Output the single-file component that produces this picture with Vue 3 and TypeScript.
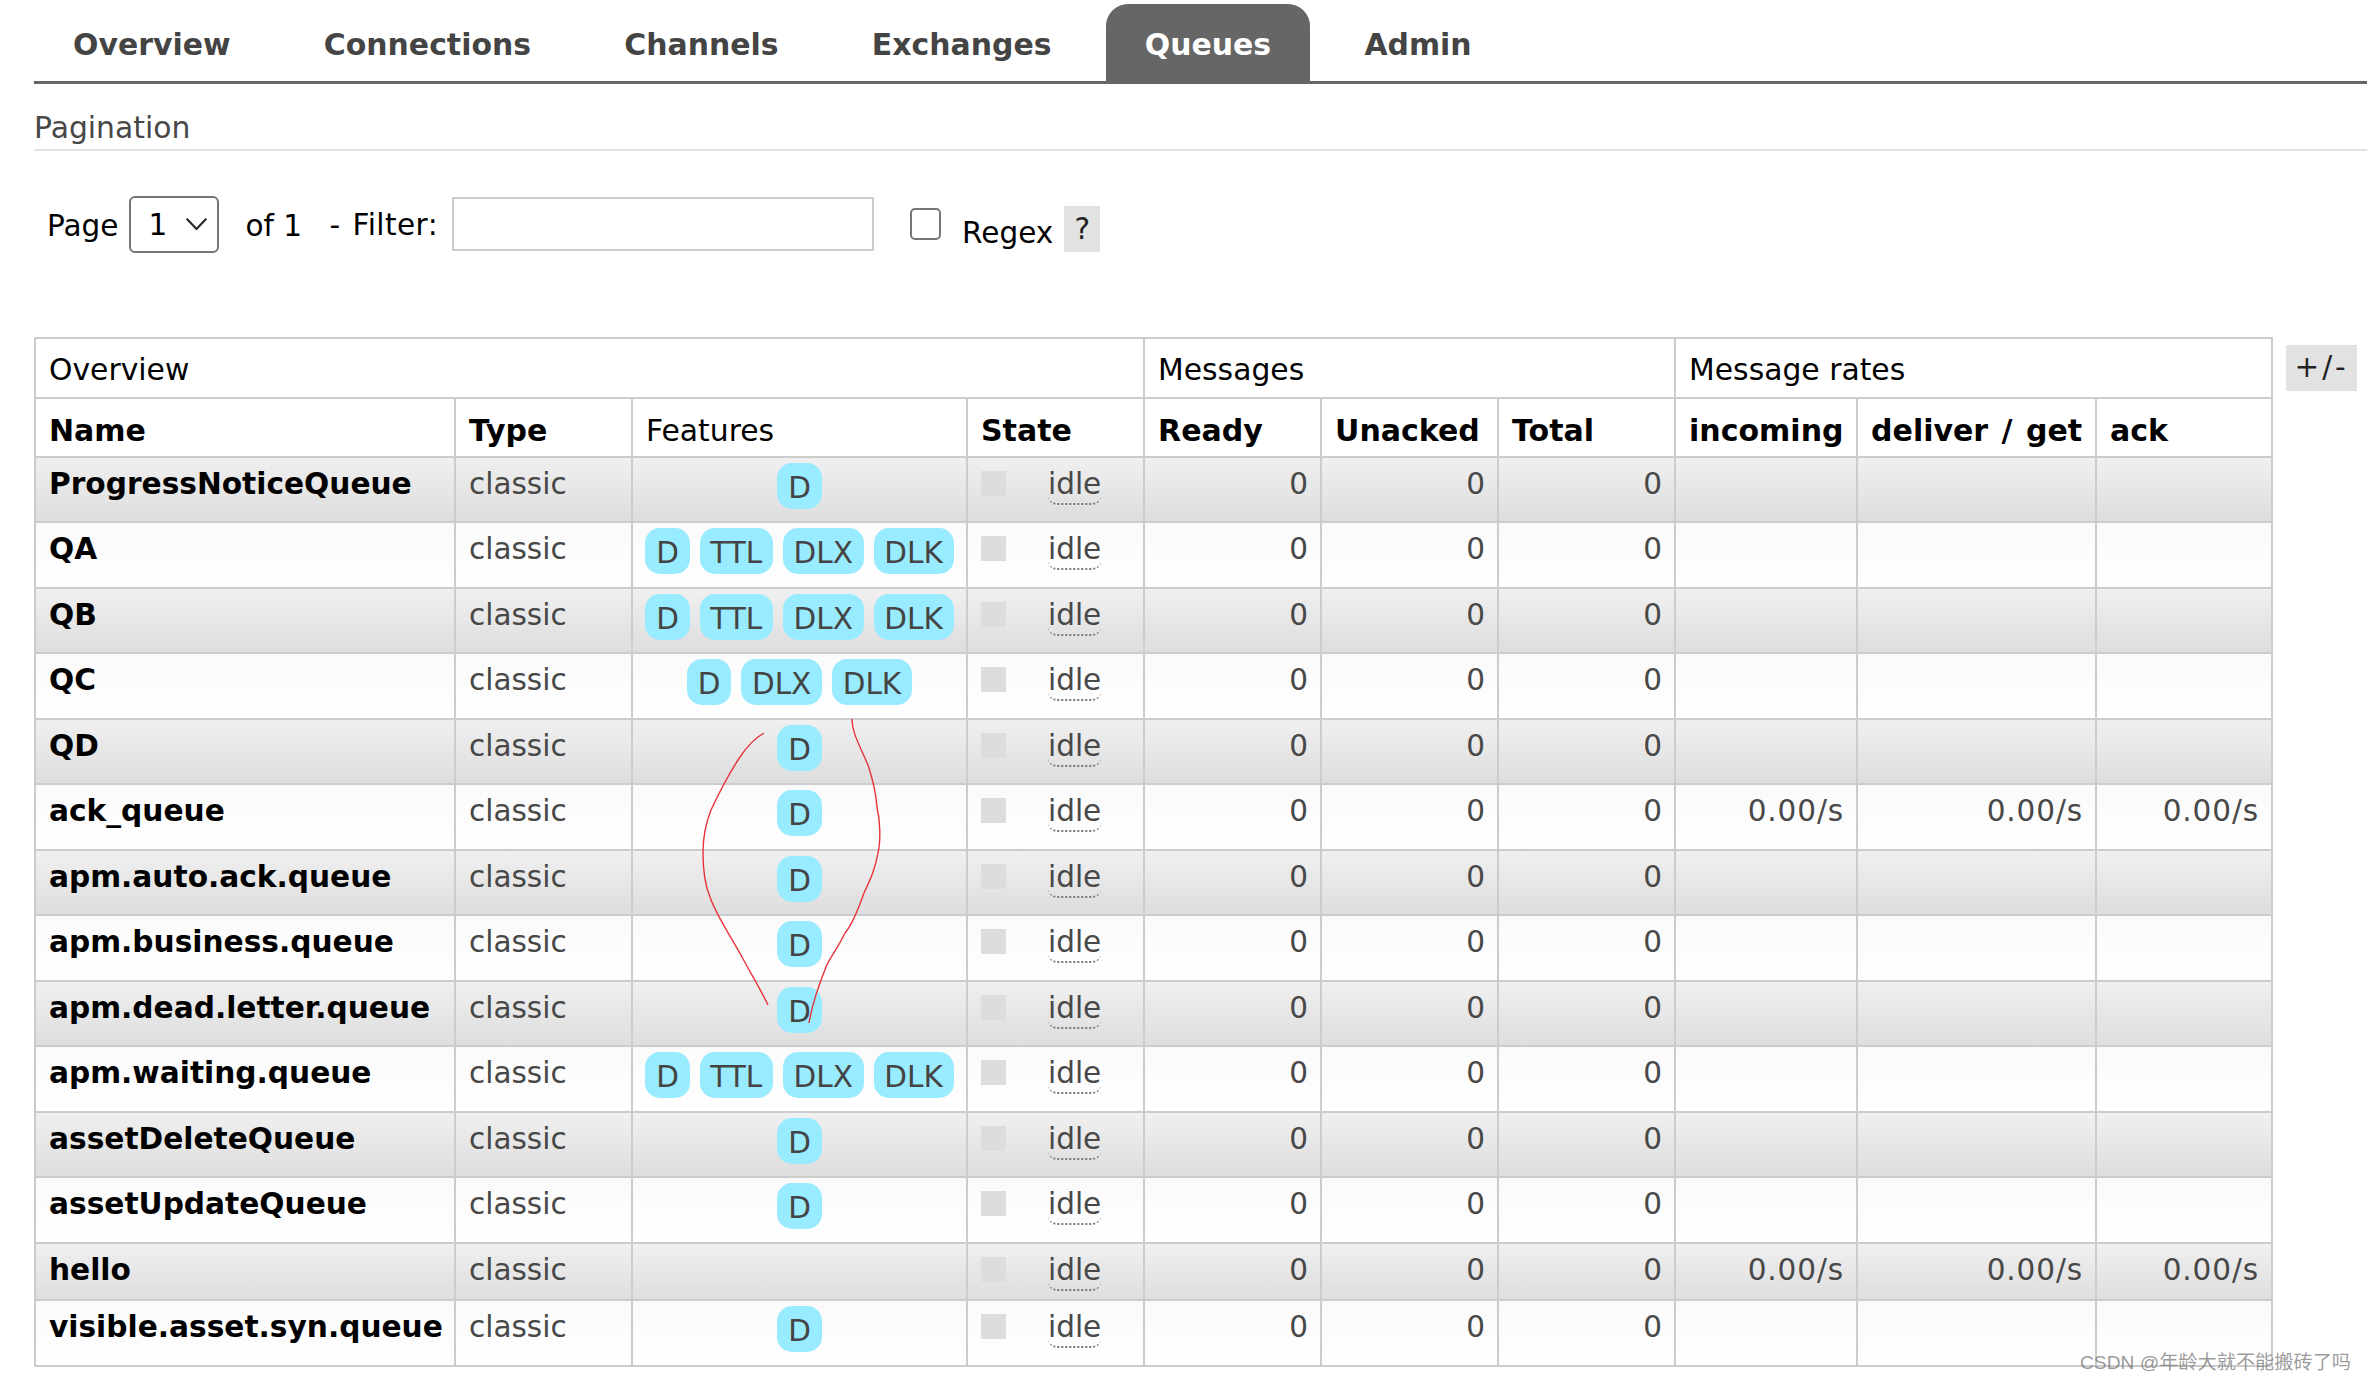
<script setup lang="ts">
interface Queue {
  name: string
  features: string[]
  rates?: boolean
}

const all = ['D', 'TTL', 'DLX', 'DLK']
const tabs = ['Overview', 'Connections', 'Channels', 'Exchanges', 'Queues', 'Admin']
const queues: Queue[] = [
  { name: 'ProgressNoticeQueue', features: ['D'] },
  { name: 'QA', features: all },
  { name: 'QB', features: all },
  { name: 'QC', features: ['D', 'DLX', 'DLK'] },
  { name: 'QD', features: ['D'] },
  { name: 'ack_queue', features: ['D'], rates: true },
  { name: 'apm.auto.ack.queue', features: ['D'] },
  { name: 'apm.business.queue', features: ['D'] },
  { name: 'apm.dead.letter.queue', features: ['D'] },
  { name: 'apm.waiting.queue', features: all },
  { name: 'assetDeleteQueue', features: ['D'] },
  { name: 'assetUpdateQueue', features: ['D'] },
  { name: 'hello', features: [], rates: true },
  { name: 'visible.asset.syn.queue', features: ['D'] },
]
const colWidths = [420, 177, 335, 177, 177, 177, 177, 182, 239, 176]
</script>

<template>
  <div class="page">
    <nav class="tabs">
      <a v-for="t in tabs" :key="t" class="tab" :class="{ active: t === 'Queues' }">{{ t }}</a>
    </nav>

    <h3 class="section">Pagination</h3>

    <div class="filters">
      <span class="lbl page-lbl">Page</span>
      <div class="select-wrap">
        <select class="sel"><option>1</option></select>
        <svg class="chev" viewBox="0 0 21 12" width="21" height="12"><path d="M0.7 0.7 L10.5 11 L20.3 0.7" fill="none" stroke="#222" stroke-width="2" /></svg>
      </div>
      <span class="lbl of-lbl">of 1</span>
      <span class="lbl filter-lbl">- Filter:</span>
      <input class="filter" type="text" />
      <input class="check" type="checkbox" />
      <span class="lbl regex-lbl">Regex</span>
      <span class="help">?</span>
    </div>

    <div class="table-row">
      <table class="list">
        <colgroup>
          <col v-for="(w, i) in colWidths" :key="i" :style="{ width: w + 'px' }" />
        </colgroup>
        <thead>
          <tr class="h1">
            <th colspan="4">Overview</th>
            <th colspan="3">Messages</th>
            <th colspan="3">Message rates</th>
          </tr>
          <tr class="h2">
            <th class="b">Name</th>
            <th class="b">Type</th>
            <th>Features</th>
            <th class="b">State</th>
            <th class="b">Ready</th>
            <th class="b">Unacked</th>
            <th class="b">Total</th>
            <th class="b">incoming</th>
            <th class="b wide">deliver / get</th>
            <th class="b">ack</th>
          </tr>
        </thead>
        <tbody>
          <tr
            v-for="(q, i) in queues"
            :key="q.name"
            :class="[i % 2 === 0 ? 'alt1' : 'alt2', { short: q.features.length === 0 }]"
          >
            <td class="name">{{ q.name }}</td>
            <td>classic</td>
            <td class="feat">
              <div class="pills">
                <span v-for="f in q.features" :key="f" class="pill">{{ f }}</span>
              </div>
            </td>
            <td>
              <div class="state">
                <span class="square"></span>
                <span class="idle">idle</span>
              </div>
            </td>
            <td class="num">0</td>
            <td class="num">0</td>
            <td class="num">0</td>
            <td class="num rate">{{ q.rates ? '0.00/s' : '' }}</td>
            <td class="num rate">{{ q.rates ? '0.00/s' : '' }}</td>
            <td class="num rate">{{ q.rates ? '0.00/s' : '' }}</td>
          </tr>
        </tbody>
      </table>
      <span class="plus">+/-</span>
    </div>

    <svg class="ink" viewBox="0 0 2367 1382" width="2367" height="1382" fill="none" stroke="#e8343a" stroke-width="1.4">
      <path d="M764 733 C755 738 746 748 740 757 C728 775 718 795 711 810 C705 825 703 840 703 853 C703 870 705 885 710 897 C716 915 730 935 742 957 C750 972 762 992 768 1005" />
      <path d="M852 719 C852 732 858 742 868 765 C873 780 876 795 877 807 C880 820 881 840 878 853 C875 870 870 880 864 893 C858 910 852 925 845 933 C838 948 830 957 826 967 C820 982 812 1005 809 1023" />
    </svg>
    <div class="mark">CSDN @年龄大就不能搬砖了吗</div>
  </div>
</template>

<style>
html, body { margin: 0; background: #fff; overflow: hidden; }
</style>

<style scoped>
.page {
  position: relative;
  width: 2367px;
  height: 1382px;
  box-sizing: border-box;
  padding: 4px 0 0 34px;
  font-family: "DejaVu Sans", Verdana, sans-serif;
  font-size: 29.5px;
  color: #000;
  overflow: hidden;
}
.tabs {
  display: flex;
  gap: 15.3px;
  height: 77px;
  border-bottom: 3px solid #666;
}
.tab {
  padding: 23px 39px 0;
  font-size: 29.9px;
  font-weight: 700;
  color: #444;
  border-radius: 22px 22px 0 0;
  line-height: 35px;
}
.tab.active { background: #666; color: #fff; }
.section {
  margin: 26px 0 0;
  padding-bottom: 4px;
  font-size: 29.8px;
  line-height: 35px;
  font-weight: 400;
  color: #484848;
  border-bottom: 2px solid #e2e2e2;
}
.filters {
  display: flex;
  align-items: flex-start;
  height: 185.5px;
  padding-top: 45px;
  box-sizing: border-box;
}
.lbl { line-height: 35px; white-space: nowrap; }
.page-lbl { margin: 13px 0 0 13px; }
.select-wrap { position: relative; margin: 0 0 0 11px; height: 57px; }
.sel {
  appearance: none;
  width: 90px;
  height: 57px;
  box-sizing: border-box;
  border: 2px solid #767676;
  border-radius: 6px;
  background: #fff;
  padding: 0 0 0 17px;
  font: inherit;
  color: #000;
}
.chev { position: absolute; left: 57px; top: 22px; pointer-events: none; }
.of-lbl { margin: 13px 0 0 26px; }
.filter-lbl {
  margin: 12px 0 0 27.5px;
  word-spacing: 2px;
  letter-spacing: 0.45px;
}
.filter {
  margin: 1px 0 0 14px;
  width: 422px;
  height: 54px;
  box-sizing: border-box;
  border: 2px solid #ccc;
  background: #fff;
  padding: 0;
}
.check {
  appearance: none;
  margin: 12px 0 0 36px;
  width: 31px;
  height: 32px;
  box-sizing: border-box;
  border: 2px solid #767676;
  border-radius: 5px;
  background: #fff;
}
.regex-lbl { margin: 20px 0 0 21px; }
.help {
  margin: 10px 0 0 11px;
  width: 36px;
  height: 46px;
  line-height: 46px;
  text-align: center;
  background: #e2e2e2;
  color: #222;
}
.table-row { display: flex; align-items: flex-start; gap: 13px; }
.list {
  table-layout: fixed;
  width: 2237px;
  border-collapse: collapse;
  border: 2px solid #ccc;
  flex: none;
}
th, td {
  border: 2px solid #ccc;
  padding: 9px 13px 0;
  text-align: left;
  vertical-align: top;
  line-height: 34px;
  white-space: nowrap;
  box-sizing: border-box;
}
th { font-weight: 400; background: #fff; color: #000; font-size: 29.8px; }
th.b { font-weight: 700; font-size: 30px; }
th.wide { word-spacing: 3px; }
.h1 th { height: 60px; padding-top: 14px; }
.h2 th { height: 59px; padding-top: 15px; }
td { height: 65.5px; color: #484848; }
.short td { height: 57.5px; }
.alt1 { background: linear-gradient(to bottom, #f0f0f0, #ddd); }
.alt2 { background: linear-gradient(to bottom, #fafafa, #fff); }
.name { font-weight: 700; color: #000; font-size: 29.65px; }
.num { text-align: right; padding-right: 12px; }
.rate { letter-spacing: 0.9px; }
.feat { padding: 5px 0 0; }
.pills { display: flex; justify-content: center; gap: 10px; }
.pill {
  height: 46px;
  line-height: 50px;
  padding: 0 10.7px;
  border-radius: 15px;
  background: #99ebff;
  color: #444;
}
.state { display: flex; align-items: flex-start; }
.square { width: 25px; height: 25px; margin-top: 4px; background: #ddd; }
.idle {
  margin-left: 42px;
  height: 36px;
  border-bottom: 2px dotted #777;
  border-radius: 0 0 9px 9px;
}
.plus {
  margin-top: 8px;
  width: 71px;
  height: 46px;
  line-height: 44px;
  letter-spacing: 3px;
  text-align: center;
  background: #e2e2e2;
  color: #222;
  flex: none;
}
.ink { position: absolute; left: 0; top: 0; pointer-events: none; }
.mark {
  position: absolute;
  left: 2080px;
  top: 1352px;
  font-family: "Liberation Sans", "Noto Sans CJK SC", sans-serif;
  font-size: 19.2px;
  line-height: 22px;
  white-space: nowrap;
  color: rgba(110, 110, 110, 0.7);
}
</style>
